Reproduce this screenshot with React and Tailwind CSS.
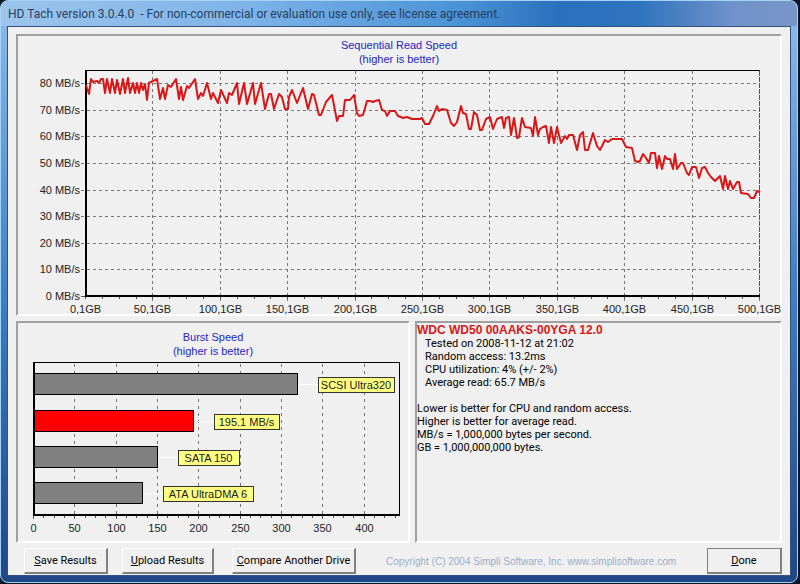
const READ_SPEED_POINTS = [
  '86,85 89,94 91,79 93,82 97,81 99,83 101,79 103,79 105,93 107,79 110,93 112,79 115,93 117,80 120,94 123,79',
  '125,93 128,78 130,93 133,83 135,93 137,83 139,93 141,83 143,90 145,84 147,100 149,83 157,79 160,99 163,88',
  '165,99 168,85 171,87 176,79 179,99 181,87 183,100 187,86 189,88 195,79 198,99 201,93 203,96 207,83 211,99',
  '213,93 218,103 221,90 227,103 229,93 232,95 237,83 239,104 244,83 247,104 253,83 255,104 261,83 265,109',
  '269,94 271,94 274,109 279,94 282,97 285,109 288,109 289,97 292,90 297,103 303,88 308,109 312,94 314,95',
  '319,115 321,115 326,102 332,95 337,121 339,116 343,116 345,100 350,100 354,95 357,113 359,116 363,115',
  '367,101 370,101 373,102 375,101 379,100 382,110 385,111 387,116 390,111 395,111 398,116 401,117 403,118',
  '407,117 412,119 417,119 420,119 422,118 425,124 429,124 433,116 437,106 439,111 442,109 447,110 451,123',
  '454,126 457,122 461,106 463,113 466,114 469,129 471,129 474,112 477,115 480,130 482,130 486,119 490,117',
  '493,129 497,119 502,117 504,128 506,118 509,117 511,135 514,118 517,138 519,137 522,118 525,127 531,128',
  '533,136 535,117 538,135 540,129 543,127 546,126 549,143 551,127 554,143 557,127 561,143 565,136 567,139',
  '569,135 573,135 577,150 580,135 583,132 585,150 588,150 593,133 597,146 600,150 605,140 608,142 612,139',
  '622,139 626,147 632,148 635,161 638,162 640,161 643,154 646,158 649,163 651,153 655,153 657,168 659,156',
  '662,169 665,156 667,159 670,159 673,169 675,154 677,169 681,163 683,163 687,173 689,175 692,167 696,167',
  '699,178 702,168 705,167 708,173 711,177 715,181 720,176 723,189 725,176 728,189 730,181 733,189 737,182',
  '739,182 741,193 748,194 751,198 754,198 757,191 760,192',
].join(' ');

const SPEEDS = [0, 10, 20, 30, 40, 50, 60, 70, 80];
const POSITIONS = [0, 50, 100, 150, 200, 250, 300, 350, 400, 450, 500];

const BURST_BARS = [
  { label: 'SCSI Ultra320', y: 373, end: 298, labelX: 318, labelW: 76, fill: '#808080' },
  { label: '195.1 MB/s', y: 410, end: 194, labelX: 214, labelW: 65, fill: '#ff0000' },
  { label: 'SATA 150', y: 446, end: 158, labelX: 178, labelW: 61, fill: '#808080' },
  { label: 'ATA UltraDMA 6', y: 482, end: 143, labelX: 163, labelW: 90, fill: '#808080' },
];
const BURST_TICKS = [0, 50, 100, 150, 200, 250, 300, 350, 400];

const speedY = (v) => Math.round(296 - v * 2.66) + 0.5;
const positionX = (v) => Math.round(86 + v * 1.348) - 0.5;
const burstX = (v) => Math.round(33 + v * 0.827) + 0.5;

const Panel = ({ className = '', children }) => (
  <section className={`border-2 border-t-[#a0a0a0] border-l-[#a0a0a0] border-r-white border-b-white ${className}`}>
    {children}
  </section>
);

const ChartTitle = ({ children }) => (
  <h2 className="text-center text-[11px] leading-[14px] text-[#2424c4]">
    {children}
    <br />
    (higher is better)
  </h2>
);

const ReadSpeedChart = () => (
  <svg viewBox="18 66 762 248" className="block w-full h-auto overflow-visible" fontSize="11" fill="#222">
    <g stroke="#777" strokeDasharray="3 3">
      {SPEEDS.slice(1).map(v => (
        <line key={v} x1="81" x2="760" y1={speedY(v)} y2={speedY(v)} />
      ))}
      {POSITIONS.slice(1).map(v => (
        <line key={v} x1={positionX(v)} x2={positionX(v)} y1="71" y2="301" />
      ))}
    </g>
    <g stroke="#555">
      {Array.from({ length: 41 }, (_, i) => (
        <line key={i} x1={positionX(i * 12.5)} x2={positionX(i * 12.5)} y1="297" y2="299" />
      ))}
      <line x1="81" x2="86" y1="296.5" y2="296.5" />
      <line x1="759.5" x2="759.5" y1="71" y2="296" strokeDasharray="5 1" />
    </g>
    <path d="M85 70.5H760" stroke="#000" fill="none" />
    <path d="M86 70V296H760" stroke="#000" strokeWidth="2" fill="none" />
    <polyline points={READ_SPEED_POINTS} stroke="#d81818" strokeWidth="2" strokeLinejoin="round" fill="none" />
    {SPEEDS.map(v => (
      <text key={v} x="80" y={speedY(v) + 3.5} textAnchor="end">{v} MB/s</text>
    ))}
    {POSITIONS.map(v => (
      <text key={v} x={positionX(v)} y="313" textAnchor="middle">{v},1GB</text>
    ))}
  </svg>
);

const BurstSpeedChart = () => (
  <svg viewBox="18 358 390 183" className="block w-full h-auto" fontSize="11" fill="#222">
    <g stroke="#777" strokeDasharray="3 4">
      {BURST_TICKS.slice(1).map(v => (
        <line key={v} x1={burstX(v)} x2={burstX(v)} y1="364" y2="519" />
      ))}
    </g>
    <g stroke="#555">
      {Array.from({ length: 36 }, (_, i) => (
        <line key={i} x1={burstX(i * 12.5)} x2={burstX(i * 12.5)} y1="516" y2={i % 4 ? 518 : 519} />
      ))}
    </g>
    <path d="M33 362.5H399.5V515" stroke="#000" fill="none" />
    <path d="M34 362V515H400" stroke="#000" strokeWidth="2" fill="none" />
    {BURST_BARS.map(bar => (
      <g key={bar.label}>
        <rect x="34.5" y={bar.y + 0.5} width={bar.end - 35} height="21" fill={bar.fill} stroke="#000" />
        <line x1={bar.end} x2={bar.labelX} y1={bar.y + 11.5} y2={bar.y + 11.5} stroke="#fff" />
        <rect x={bar.labelX + 0.5} y={bar.y + 4.5} width={bar.labelW} height="15" fill="#ffff80" stroke="#333" />
        <text x={bar.labelX + bar.labelW / 2} y={bar.y + 16} textAnchor="middle">{bar.label}</text>
      </g>
    ))}
    {BURST_TICKS.map(v => (
      <text key={v} x={burstX(v)} y="532" textAnchor="middle">{v}</text>
    ))}
  </svg>
);

const DialogButton = ({ accessKey, children, className = '' }) => (
  <button
    type="button"
    accessKey={accessKey.toLowerCase()}
    className={`h-[26px] shrink-0 border-t border-l border-r-2 border-b-2 border-r-[#808080] border-b-[#808080] bg-[#f0f0f0] font-[Roboto,sans-serif] text-[11px] leading-4 whitespace-nowrap text-black ${className}`}
  >
    <span className="underline">{accessKey}</span>{children}
  </button>
);

const App = () => (
  <div className="min-h-screen bg-[#0a1626] pr-0.5 pb-0.5 font-['Liberation_Sans',Arial,sans-serif]">
    <div className="rounded-lg border border-[#a5d3f5] bg-linear-to-b from-[#8cbcec] via-[#3f7fc4] to-[#1f4788] px-1.5 pb-1.5">
      <header className="-mx-1.5 flex h-[25px] items-center rounded-t-lg bg-[linear-gradient(to_right,#9cc4ec_0%,#7fb4e8_30%,#4a92d6_58%,#2a70bc_70%,#2f73be_80%,#7092ca_92%,#7895c6_100%)] px-[7px]">
        <h1 className="whitespace-pre font-[Roboto,sans-serif] text-[12px] leading-4 text-[#27405f]">
          {'HD Tach version 3.0.4.0  - For non-commercial or evaluation use only, see license agreement.'}
        </h1>
      </header>

      <main className="border border-[#33517c] bg-[#f0f0f0] px-2 pt-[7px] pb-px">
        <Panel className="pt-0.5">
          <ChartTitle>Sequential Read Speed</ChartTitle>
          <ReadSpeedChart />
        </Panel>

        <div className="mt-[5px] flex gap-[5px]">
          <Panel className="w-[394px] pt-[7px]">
            <ChartTitle>Burst Speed</ChartTitle>
            <BurstSpeedChart />
          </Panel>
          <Panel className="flex-1 pt-px font-[Roboto,sans-serif] text-[11px] leading-[13px] text-black">
            <h2 className="font-['Liberation_Sans',Arial,sans-serif] text-[12px] leading-[13px] font-bold text-[#d81818]">
              WDC WD50 00AAKS-00YGA 12.0
            </h2>
            <ul className="pl-2">
              <li>Tested on 2008-11-12 at 21:02</li>
              <li>Random access: 13.2ms</li>
              <li>CPU utilization: 4% (+/- 2%)</li>
              <li>Average read: 65.7 MB/s</li>
            </ul>
            <p className="mt-[13px]">
              Lower is better for CPU and random access.<br />
              Higher is better for average read.<br />
              MB/s = 1,000,000 bytes per second.<br />
              GB = 1,000,000,000 bytes.
            </p>
          </Panel>
        </div>

        <footer className="mt-[5px] flex items-center pl-2">
          <DialogButton accessKey="S" className="w-[84px] border-t-white border-l-white">ave Results</DialogButton>
          <DialogButton accessKey="U" className="ml-[14px] w-[92px] border-t-white border-l-white">pload Results</DialogButton>
          <DialogButton accessKey="C" className="ml-[18px] w-[124px] border-t-white border-l-white">ompare Another Drive</DialogButton>
          <p className="ml-[30px] pt-0.5 text-[10px] leading-4 whitespace-nowrap text-[#98aecb]">
            Copyright (C) 2004 Simpli Software, Inc. www.simplisoftware.com
          </p>
          <DialogButton accessKey="D" className="ml-auto w-[75px] border-t-[#808080] border-l-[#808080]">one</DialogButton>
        </footer>
      </main>
    </div>
  </div>
);

export default App;
